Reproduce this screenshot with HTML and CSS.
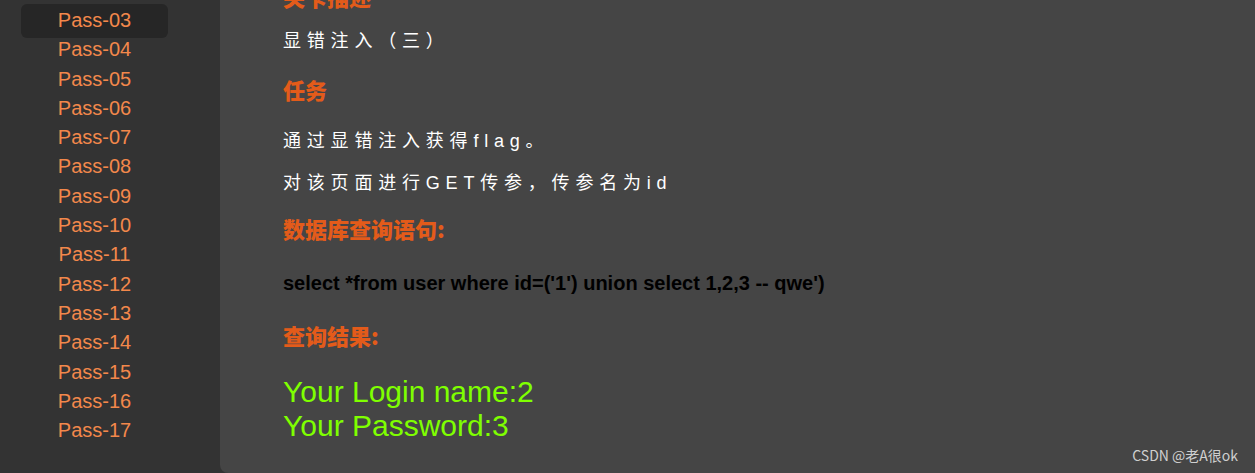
FILE: index.html
```html
<!DOCTYPE html>
<html lang="zh-CN">
<head>
    <meta charset="UTF-8">
    <meta name="viewport" content="width=device-width, initial-scale=1.0">
    <title>Pass-03 显错注入</title>
    <link rel="stylesheet" href="styles.css">
</head>
<body>
    <div class="layout">
        <nav class="sidebar">
            <a class="pass active" href="#">Pass-03</a>
            <a class="pass" href="#">Pass-04</a>
            <a class="pass" href="#">Pass-05</a>
            <a class="pass" href="#">Pass-06</a>
            <a class="pass" href="#">Pass-07</a>
            <a class="pass" href="#">Pass-08</a>
            <a class="pass" href="#">Pass-09</a>
            <a class="pass" href="#">Pass-10</a>
            <a class="pass" href="#">Pass-11</a>
            <a class="pass" href="#">Pass-12</a>
            <a class="pass" href="#">Pass-13</a>
            <a class="pass" href="#">Pass-14</a>
            <a class="pass" href="#">Pass-15</a>
            <a class="pass" href="#">Pass-16</a>
            <a class="pass" href="#">Pass-17</a>
        </nav>
        <main class="content">
            <div class="inner">
                <h3 class="title">关卡描述</h3>
                <p class="desc">显错注入（三）</p>
                <h3 class="title">任务</h3>
                <p class="desc">通过显错注入获得flag。</p>
                <p class="desc">对该页面进行GET传参，传参名为id</p>
                <h3 class="title">数据库查询语句:</h3>
                <p class="sql">select *from user where id=('1') union select 1,2,3 -- qwe')</p>
                <h3 class="title">查询结果:</h3>
                <div class="result">
                    Your Login name:2<br>
                    Your Password:3
                </div>
            </div>
        </main>
    </div>
    <div class="watermark">CSDN @老A很ok</div>
</body>
</html>
```

FILE: styles.css
```css
:root {
    --side-bg: #333333;
    --main-bg: #454545;
    --active-bg: #262626;
    --link-color: #f3884b;
    --title-color: #e35b1a;
    --green: #7fff00;
}

html, body {
    margin: 0;
    height: 100%;
    overflow: hidden;
}

body {
    background-color: var(--side-bg);
    font-family: "Liberation Sans", Arial, "Noto Sans CJK SC", sans-serif;
}

.layout {
    display: flex;
    height: 100vh;
}

.sidebar {
    width: 220px;
    flex-shrink: 0;
    display: flex;
    flex-direction: column;
    padding: 6px 0 0 21px;
    box-sizing: border-box;
}

.pass {
    width: 147px;
    text-align: center;
    font-size: 20px;
    line-height: 29.3px;
    color: var(--link-color);
    text-decoration: none;
}

.pass.active {
    background-color: var(--active-bg);
    border-radius: 6px;
    padding: 2.5px 0;
    margin: -2.5px 0;
}

.content {
    flex: 1;
    background-color: var(--main-bg);
    border-radius: 0 0 0 8px;
    overflow: hidden;
}

.inner {
    padding-left: 63px;
    margin-top: -19px;
}

.title {
    margin: 18px 0 25px;
    font-family: "Noto Sans CJK SC", sans-serif;
    font-size: 22px;
    line-height: 30px;
    font-weight: 900;
    color: var(--title-color);
}

.inner .title:first-child {
    margin-top: 0;
    margin-bottom: 18px;
}

.desc {
    margin: 0 0 18px;
    font-family: "Liberation Sans", "Noto Sans CJK SC", sans-serif;
    font-size: 18px;
    line-height: 24px;
    letter-spacing: 5.8px;
    color: #ffffff;
}

.title:first-child + .desc {
    margin-bottom: 21px;
}

.sql {
    margin: 28px 0 25px;
    font-size: 20px;
    line-height: 24px;
    font-weight: bold;
    color: #000000;
}

.result {
    margin-top: 20px;
    font-size: 30px;
    line-height: 34px;
    color: var(--green);
}

.watermark {
    position: absolute;
    right: 17px;
    bottom: 8px;
    font-family: "Noto Sans CJK SC", sans-serif;
    font-size: 14px;
    color: #cfcfcf;
}
```
